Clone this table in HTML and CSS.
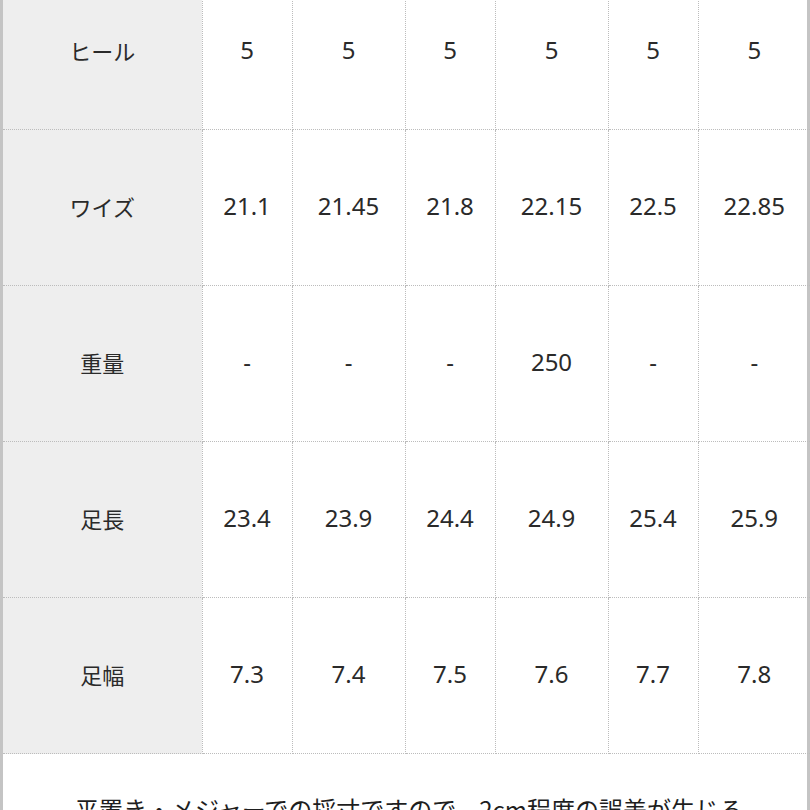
FILE: index.html
```html
<!DOCTYPE html>
<html lang="ja">
<head>
<meta charset="utf-8">
<link rel="stylesheet" href="styles.css">
</head>
<body>
<div class="frame">
  <table class="size-table">
    <colgroup>
      <col class="c-head">
      <col class="c-n">
      <col class="c-w">
      <col class="c-n">
      <col class="c-w">
      <col class="c-n">
      <col class="c-w2">
    </colgroup>
    <tbody>
      <tr><th>ヒール</th><td>5</td><td>5</td><td>5</td><td>5</td><td>5</td><td>5</td></tr>
      <tr><th>ワイズ</th><td>21.1</td><td>21.45</td><td>21.8</td><td>22.15</td><td>22.5</td><td>22.85</td></tr>
      <tr><th>重量</th><td>-</td><td>-</td><td>-</td><td>250</td><td>-</td><td>-</td></tr>
      <tr><th>足長</th><td>23.4</td><td>23.9</td><td>24.4</td><td>24.9</td><td>25.4</td><td>25.9</td></tr>
      <tr><th>足幅</th><td>7.3</td><td>7.4</td><td>7.5</td><td>7.6</td><td>7.7</td><td>7.8</td></tr>
    </tbody>
  </table>
  <p class="note">平置き・メジャーでの採寸ですので、2cm程度の誤差が生じる</p>
</div>
</body>
</html>
```
FILE: styles.css
```css
html, body {
  margin: 0;
  padding: 0;
  background: #ffffff;
}
body {
  width: 810px;
  height: 810px;
  overflow: hidden;
  font-family: "Noto Sans CJK JP", "Noto Sans", sans-serif;
  color: #2a2a2a;
}
.frame {
  width: 810px;
  box-sizing: border-box;
  border-left: 3px solid #c4c4c4;
  border-right: 3px solid #c4c4c4;
  min-height: 900px;
  margin-top: -26px;
}
.size-table {
  width: 100%;
  border-collapse: collapse;
  table-layout: fixed;
}
.c-head { width: 199px; }
.c-n { width: 90px; }
.c-w { width: 113px; }
.c-w2 { width: 112px; }
.size-table th,
.size-table td {
  height: 151px;
  padding: 0 0 4px 0;
  text-align: center;
  vertical-align: middle;
  font-weight: normal;
  border: 1px dotted #bcbcbc;
}
.size-table th {
  font-size: 22px;
  background: #eeeeee;
  border-left: none;
}
.size-table td {
  font-family: "Noto Sans", "Noto Sans CJK JP", sans-serif;
  font-size: 24px;
}
.size-table tr:first-child th,
.size-table tr:first-child td {
  border-top: none;
}
.size-table td:last-child {
  border-right: none;
}
.note {
  margin: 0;
  padding: 38px 0 0 8px;
  font-size: 24px;
  line-height: 1.4;
  text-align: center;
  white-space: nowrap;
  color: #1e1e1e;
}
```
